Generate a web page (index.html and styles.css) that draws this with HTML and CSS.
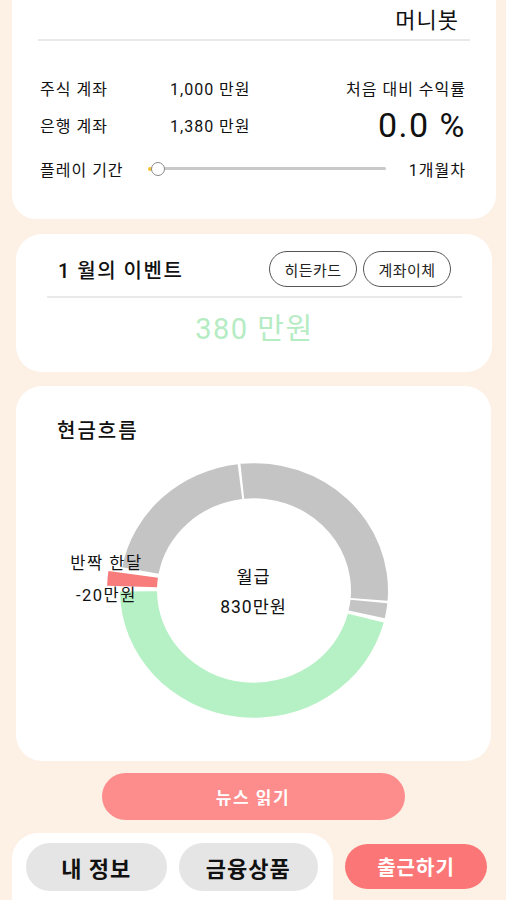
FILE: index.html
```html
<!DOCTYPE html>
<html lang="ko">
<head>
<meta charset="utf-8">
<title>머니봇</title>
<link rel="stylesheet" href="styles.css">
</head>
<body>
<div class="page">
  <section class="card card-top">
    <div class="app-title">머니봇</div>
    <div class="divider"></div>
    <div class="stats">
      <div class="stat-label">주식 계좌</div>
      <div class="stat-value">1,000 만원</div>
      <div class="stat-right">처음 대비 수익률</div>
      <div class="stat-label row2">은행 계좌</div>
      <div class="stat-value row2">1,380 만원</div>
      <div class="stat-big row2">0.0 %</div>
    </div>
    <div class="period">
      <div class="period-label">플레이 기간</div>
      <div class="slider">
        <div class="slider-track"></div>
        <div class="slider-dot"></div>
        <div class="slider-thumb"></div>
      </div>
      <div class="period-value">1개월차</div>
    </div>
  </section>

  <section class="card card-event">
    <div class="event-head">
      <div class="event-title">1 월의 이벤트</div>
      <div class="event-actions">
        <button class="chip">히든카드</button>
        <button class="chip">계좌이체</button>
      </div>
    </div>
    <div class="divider"></div>
    <div class="event-amount">380 만원</div>
  </section>

  <section class="card card-flow">
    <div class="flow-title">현금흐름</div>
    <div class="chart">
      <svg class="donut" viewBox="-150 -150 300 300" preserveAspectRatio="none" width="300" height="285">
        <path fill="#c4c4c4" d="M -13.54 -133.31 A 134 134 0 0 1 133.57 10.75 L 96.69 7.78 A 97 97 0 0 0 -9.80 -96.50 Z"/>
        <path fill="#c4c4c4" d="M 133.31 13.54 A 134 134 0 0 1 130.77 29.23 L 94.66 21.16 A 97 97 0 0 0 96.50 9.80 Z"/>
        <path fill="#b5f1c4" d="M 129.67 33.78 A 134 134 0 0 1 -133.99 1.17 L -97.00 0.85 A 97 97 0 0 0 93.87 24.45 Z"/>
        <path fill="#c4c4c4" d="M -131.76 -24.42 A 134 134 0 0 1 -16.33 -133.00 L -11.82 -96.28 A 97 97 0 0 0 -95.38 -17.68 Z"/>
        <path fill="#f87c7c" d="M -146.91 -5.13 A 147 147 0 0 1 -145.57 -20.46 L -96.06 -13.50 A 97 97 0 0 0 -96.94 -3.39 Z"/>
      </svg>
      <div class="slice-label">반짝 한달<br>-20만원</div>
      <div class="center-label">월급<br>830만원</div>
    </div>
  </section>

  <button class="news-btn">뉴스 읽기</button>

  <div class="bottom">
    <nav class="tabs">
      <button class="tab">내 정보</button>
      <button class="tab">금융상품</button>
    </nav>
    <button class="go-btn">출근하기</button>
  </div>
</div>
</body>
</html>
```

FILE: styles.css
```css
* { box-sizing: border-box; }

html, body {
  margin: 0;
  padding: 0;
  background: #fdf1e6;
  overflow: hidden;
}

body {
  font-family: Roboto, "Noto Sans CJK KR", "Noto Sans", sans-serif;
  color: #111;
}

button {
  font-family: inherit;
  border: none;
  cursor: pointer;
  padding: 0;
}

.page {
  width: 506px;
  height: 900px;
  display: flex;
  flex-direction: column;
}

.page > * {
  flex-shrink: 0;
}

.card {
  background: #fff;
}

.divider {
  height: 2px;
  background: #e9e9e9;
}

/* top card */
.card-top {
  margin: 0 10px 0 12px;
  border-radius: 0 0 24px 24px;
  padding: 6px 26px 38px 26px;
}

.app-title {
  text-align: right;
  font-size: 22px;
  letter-spacing: 1px;
  line-height: 30px;
  padding-right: 11px;
}

.card-top .divider {
  margin-top: 3px;
}

.stats {
  margin-top: 35px;
  padding: 0 4px 0 2px;
  display: grid;
  grid-template-columns: 130px 1fr auto;
  grid-template-rows: 24px 50px;
  align-items: center;
  font-size: 16px;
  letter-spacing: 1px;
}

.stat-right {
  text-align: right;
}

.stat-big {
  font-size: 34px;
  letter-spacing: 1.5px;
  line-height: 40px;
  text-align: right;
}

.period {
  margin-top: 7px;
  padding: 0 4px 0 2px;
  display: flex;
  align-items: center;
  height: 24px;
  font-size: 16px;
  letter-spacing: 1px;
}

.period-label {
  width: 108px;
}

.slider {
  flex: 1;
  position: relative;
  height: 16px;
}

.slider-track {
  position: absolute;
  left: 3px;
  right: 0;
  top: 6px;
  height: 3px;
  border-radius: 2px;
  background: #c9c9c9;
}

.slider-dot {
  position: absolute;
  left: 0;
  top: 6px;
  width: 4px;
  height: 4px;
  border-radius: 50%;
  background: #f2c230;
}

.slider-thumb {
  position: absolute;
  left: 3px;
  top: 1px;
  width: 14px;
  height: 14px;
  border-radius: 50%;
  background: #fff;
  border: 1.5px solid #8a8a8a;
}

.period-value {
  width: 80px;
  text-align: right;
}

/* event card */
.card-event {
  margin: 15px 14px 0 16px;
  border-radius: 26px;
  padding: 17px 30px 23px 31px;
}

.event-head {
  display: flex;
  align-items: center;
  justify-content: space-between;
  height: 36px;
  padding: 0 11px;
}

.event-title {
  font-size: 20px;
  letter-spacing: 1.5px;
  font-weight: 500;
}

.event-actions {
  display: flex;
  gap: 6px;
}

.chip {
  width: 88px;
  height: 36px;
  border-radius: 18px;
  background: #fff;
  border: 1px solid #555;
  font-size: 15px;
  letter-spacing: 0.5px;
  color: #222;
}

.card-event .divider {
  margin-top: 9px;
}

.event-amount {
  margin-top: 11px;
  text-align: center;
  font-size: 29px;
  letter-spacing: 1.5px;
  line-height: 40px;
  color: #b5ecc3;
}

/* cash-flow card */
.card-flow {
  margin: 14px 15px 0 16px;
  border-radius: 26px;
  padding: 30px 0 26px 0;
}

.flow-title {
  padding-left: 41px;
  font-size: 20px;
  letter-spacing: 2px;
  line-height: 30px;
  font-weight: 500;
}

.chart {
  position: relative;
  height: 287px;
}

.donut {
  display: block;
  margin: 2px auto 0;
}

.slice-label {
  position: absolute;
  left: 38px;
  top: 100px;
  width: 105px;
  text-align: center;
  font-size: 16.5px;
  letter-spacing: 1.5px;
  line-height: 32px;
}

.center-label {
  position: absolute;
  left: 0;
  right: 0;
  top: 114px;
  text-align: center;
  font-size: 17.5px;
  letter-spacing: 1px;
  line-height: 30px;
}

/* buttons */
.news-btn {
  align-self: center;
  margin-top: 12px;
  width: 303px;
  height: 47px;
  border-radius: 24px;
  background: #fd8c8c;
  color: #fff;
  font-size: 17px;
  letter-spacing: 1.5px;
  font-weight: 700;
}

.bottom {
  margin-top: 13px;
  display: flex;
  align-items: flex-start;
}

.tabs {
  margin-left: 12px;
  width: 321px;
  height: 90px;
  background: #fff;
  border-radius: 26px 26px 0 0;
  padding: 10px 15px 0 14px;
  display: flex;
  gap: 12px;
}

.tab {
  width: 141px;
  height: 48px;
  border-radius: 24px;
  background: #e5e5e5;
  color: #111;
  font-size: 22px;
  letter-spacing: 1px;
  font-weight: 700;
}

.tab + .tab {
  width: 140px;
}

.go-btn {
  margin: 11px 0 0 12px;
  width: 142px;
  height: 45px;
  border-radius: 23px;
  background: #fb7777;
  color: #fff;
  font-size: 20px;
  letter-spacing: 1px;
  font-weight: 700;
}
```
